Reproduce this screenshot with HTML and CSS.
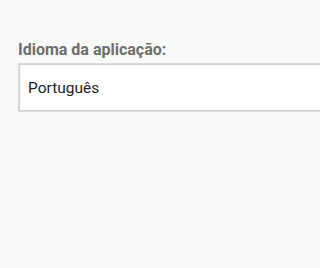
FILE: index.html
```html
<!DOCTYPE html>
<html>
<head>
<meta charset="utf-8">
<link rel="stylesheet" href="styles.css">
</head>
<body>
<div class="page">
  <div class="label">Idioma da aplicação:</div>
  <div class="select">Português</div>
</div>
</body>
</html>
```
FILE: styles.css
```css
html, body {
  margin: 0;
  padding: 0;
  background: #f7faf6;
}
.page {
  padding: 40px 0 0 18px;
  font-family: Roboto, "Noto Sans", sans-serif;
}
.label {
  font-size: 16px;
  font-weight: 700;
  color: #6e6e6e;
  line-height: 20px;
}
.select {
  margin-top: 3px;
  height: 47px;
  border: 1px solid #dcdcdc;
  border-right: none;
  box-shadow: inset 1px 1px 0 #cfcfcf, inset 0 -1px 0 #cfcfcf;
  background: #fff;
  padding-left: 9px;
  font-size: 15.5px;
  color: #222;
  line-height: 49px;
}
```
